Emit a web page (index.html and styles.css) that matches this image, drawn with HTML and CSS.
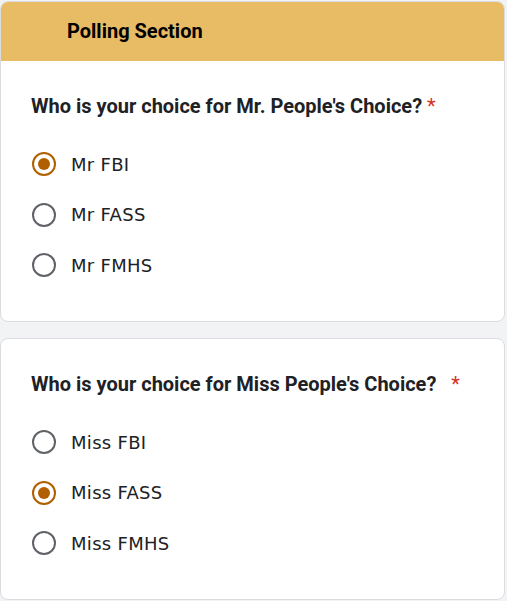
FILE: index.html
```html
<!DOCTYPE html>
<html>
<head>
<meta charset="utf-8">
<link rel="stylesheet" href="styles.css">
</head>
<body>
<div class="page">
  <section class="card">
    <div class="card-header">Polling Section</div>
    <div class="card-body">
      <div class="question">Who is your choice for Mr. People's Choice? <span class="req">*</span></div>
      <div class="options">
        <label class="option"><span class="radio checked"></span><span class="opt-text">Mr FBI</span></label>
        <label class="option"><span class="radio"></span><span class="opt-text">Mr FASS</span></label>
        <label class="option"><span class="radio"></span><span class="opt-text">Mr FMHS</span></label>
      </div>
    </div>
  </section>
  <section class="card">
    <div class="card-body">
      <div class="question">Who is your choice for Miss People's Choice? <span class="req wide">*</span></div>
      <div class="options">
        <label class="option"><span class="radio"></span><span class="opt-text">Miss FBI</span></label>
        <label class="option"><span class="radio checked"></span><span class="opt-text">Miss FASS</span></label>
        <label class="option"><span class="radio"></span><span class="opt-text">Miss FMHS</span></label>
      </div>
    </div>
  </section>
</div>
</body>
</html>
```
FILE: styles.css
```css
html, body {
  margin: 0;
  padding: 0;
  background: #f1f3f4;
}
body {
  font-family: Roboto, "Liberation Sans", sans-serif;
  color: #202124;
}
.page {
  width: 505px;
  padding-top: 1px;
  display: flex;
  flex-direction: column;
  gap: 16px;
}
.card {
  background: #fff;
  border: 1px solid #dadce0;
  border-radius: 8px;
  overflow: hidden;
}
.card-header {
  background: #e8bb65;
  height: 60px;
  margin: -1px -1px 0;
  padding-left: 67px;
  padding-bottom: 1px;
  display: flex;
  align-items: center;
  font-weight: 700;
  font-size: 20px;
  color: #000;
  box-sizing: border-box;
}
.card-body {
  padding: 32px 30px 44px;
}
.question {
  font-weight: 700;
  font-size: 20px;
  line-height: 26px;
  color: #202124;
}
.req {
  color: #d93025;
  font-weight: 400;
}
.req.wide {
  margin-left: 10px;
}
.options {
  margin-top: 33px;
  display: flex;
  flex-direction: column;
  gap: 26.5px;
}
.option {
  display: flex;
  align-items: center;
  height: 24px;
}
.radio {
  width: 20px;
  height: 20px;
  border: 2px solid #5f6368;
  border-radius: 50%;
  position: relative;
  flex: none;
  margin-left: 1px;
}
.radio.checked {
  border-color: #b06000;
}
.radio.checked::after {
  content: "";
  position: absolute;
  left: 4px;
  top: 4px;
  width: 12px;
  height: 12px;
  border-radius: 50%;
  background: #b06000;
}
.opt-text {
  margin-left: 15px;
  font-family: "DejaVu Sans", sans-serif;
  font-size: 18px;
  letter-spacing: 0.3px;
  color: #202124;
}
```
